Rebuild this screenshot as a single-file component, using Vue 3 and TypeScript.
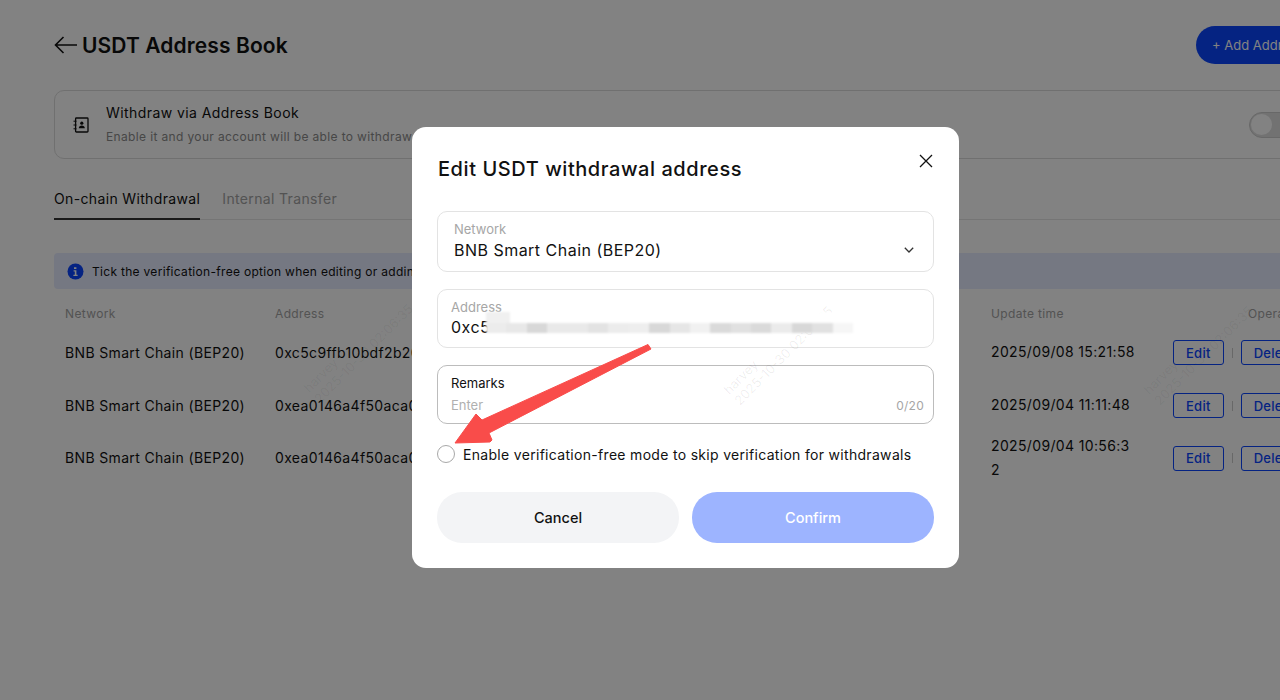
<script setup lang="ts">
interface Row {
  network: string
  address: string
  time: string
}

const rows: Row[] = [
  { network: 'BNB Smart Chain (BEP20)', address: '0xc5c9ffb10bdf2b20', time: '2025/09/08 15:21:58' },
  { network: 'BNB Smart Chain (BEP20)', address: '0xea0146a4f50aca0', time: '2025/09/04 11:11:48' },
  { network: 'BNB Smart Chain (BEP20)', address: '0xea0146a4f50aca0', time: '2025/09/04 10:56:32' },
]

// mosaic over the address, left to right
const mosaic = ['#ececec', '#e8e8e8', '#d8d8d8', '#e9e9e9', '#e9e9e9', '#e3e3e3', '#ececec', '#eeeeee', '#d8d8d8', '#e6e6e6', '#f1f1f1', '#dadada', '#e1e1e1', '#dadada', '#ebebeb', '#d8d8d8', '#e1e1e1', '#f6f6f6']

const marks = [
  { left: 322, top: 376, color: 'rgba(0, 0, 0, 0.05)' },
  { left: 742, top: 378, color: 'rgba(0, 0, 0, 0.07)' },
  { left: 1162, top: 378, color: 'rgba(0, 0, 0, 0.05)' },
]
</script>

<template>
  <div class="page">
    <div class="content">
      <header class="head">
        <svg class="back" width="24" height="18" viewBox="0 0 24 18" fill="none" stroke="#111" stroke-width="1.6">
          <path d="M23 9H1.5M9.5 1 1.5 9l8 8" />
        </svg>
        <h1>USDT Address Book</h1>
        <button class="add">+ Add Address</button>
      </header>

      <section class="card">
        <svg class="book" width="16" height="16" viewBox="0 0 16 16" fill="none" stroke="#111" stroke-width="1.3">
          <rect x="2.6" y="1" width="12.4" height="14" rx="0.8" />
          <path d="M0.5 4.2h3M0.5 8h3M0.5 11.8h3" stroke-width="1" />
          <circle cx="8.8" cy="6.2" r="1.6" fill="#111" stroke="none" />
          <path d="M5.8 11.2c0-2 1.4-2.8 3-2.8s3 .8 3 2.8z" fill="#111" stroke="none" />
        </svg>
        <div class="card-text">
          <div class="card-title">Withdraw via Address Book</div>
          <div class="card-sub">Enable it and your account will be able to withdraw to whitelisted addresses only</div>
        </div>
        <span class="toggle"><i></i></span>
      </section>

      <nav class="tabs">
        <span class="tab on">On-chain Withdrawal</span>
        <span class="tab">Internal Transfer</span>
      </nav>

      <div class="notice">
        <svg width="17" height="17" viewBox="0 0 17 17">
          <circle cx="8.5" cy="8.5" r="8" fill="#0a45ff" />
          <path d="M7 4.2h2.4v1.8H7zM6.6 7.3h2.8v4.4h1.2v1.2H6.4v-1.2h1.4V8.5H6.6z" fill="#fff" />
        </svg>
        <span>Tick the verification-free option when editing or adding an address to skip verification for withdrawals</span>
      </div>

      <div class="table">
        <div class="tr th">
          <span>Network</span>
          <span>Address</span>
          <span>Update time</span>
          <span class="op-head">Operation</span>
        </div>
        <div v-for="(row, i) in rows" :key="i" class="tr">
          <span>{{ row.network }}</span>
          <span>{{ row.address }}</span>
          <span class="time">{{ row.time }}</span>
          <span class="ops">
            <button class="link">Edit</button>
            <i class="sep"></i>
            <button class="link">Delete</button>
          </span>
        </div>
      </div>
    </div>

    <div class="overlay">
      <div class="modal">
        <div class="modal-head">
          <h2>Edit USDT withdrawal address</h2>
          <svg width="14" height="14" viewBox="0 0 14 14" fill="none" stroke="#111" stroke-width="1.3">
            <path d="M1 1l12 12M13 1 1 13" />
          </svg>
        </div>

        <div class="field select">
          <label>Network</label>
          <div class="value">BNB Smart Chain (BEP20)</div>
          <svg class="chev" width="10" height="6" viewBox="0 0 10 6" fill="none" stroke="#333" stroke-width="1.3">
            <path d="M.8.8 5 5 9.2.8" />
          </svg>
        </div>

        <div class="field addr">
          <label>Address</label>
          <div class="value">0xc5</div>
          <div class="mosaic">
            <span class="mosaic-top"></span>
            <span class="mosaic-strip">
              <i v-for="(c, i) in mosaic" :key="i" :style="{ background: c }"></i>
            </span>
          </div>
        </div>

        <div class="field remarks">
          <label>Remarks</label>
          <div class="enter">Enter</div>
          <span class="count">0/20</span>
        </div>

        <div class="check">
          <span class="radio"></span>
          <span>Enable verification-free mode to skip verification for withdrawals</span>
        </div>

        <div class="actions">
          <button class="cancel">Cancel</button>
          <button class="confirm">Confirm</button>
        </div>
      </div>
    </div>

    <div v-for="(m, i) in marks" :key="i" class="mark" :style="{ left: m.left + 'px', top: m.top + 'px', color: m.color }">
      harvey<br />2025-10-30 02:06:35
    </div>

    <svg class="arrow" width="1280" height="700" viewBox="0 0 1280 700">
      <path d="M648 344.5 651 349 489 433 492 440 490 442 455 443 476 414 482 420z" fill="#f94c4a" stroke="#f94c4a" stroke-width="1" stroke-linejoin="round" />
    </svg>
  </div>
</template>

<style>
body {
  overflow: hidden;
}
</style>

<style scoped>
.page {
  position: relative;
  width: 1280px;
  height: 700px;
  overflow: hidden;
  background: #fff;
  font-family: Inter, "Liberation Sans", sans-serif;
  color: #111;
}

button {
  font-family: inherit;
  border: 0;
  cursor: pointer;
}

.content {
  width: 1322px;
  padding: 26px 0 0 54px;
  box-sizing: border-box;
}

.head {
  display: flex;
  align-items: center;
  height: 38px;
}

.back {
  margin-right: 4px;
}

h1 {
  margin: 0;
  font-size: 21px;
  font-weight: 600;
  letter-spacing: 0.005em;
}

.add {
  margin-left: auto;
  height: 38px;
  width: 126px;
  flex-shrink: 0;
  border-radius: 19px 0 0 19px;
  background: #0a45ff;
  color: #fff;
  font-size: 13px;
  text-align: left;
  white-space: nowrap;
  padding: 0 0 0 16px;
}

.card {
  display: flex;
  align-items: center;
  margin-top: 26px;
  height: 69px;
  box-sizing: border-box;
  padding: 0 20px 0 18px;
  border: 1.5px solid #dcdcdc;
  border-radius: 10px;
}

.card-text {
  margin-left: 17px;
  white-space: nowrap;
}

.card-title {
  font-size: 14px;
  line-height: 20px;
  letter-spacing: 0.03em;
}

.card-sub {
  margin-top: 5px;
  font-size: 12px;
  line-height: 18px;
  letter-spacing: 0.03em;
  color: #8c8c8c;
}

.toggle {
  display: block;
  margin-left: auto;
  flex-shrink: 0;
  width: 52px;
  height: 26px;
  box-sizing: border-box;
  padding: 1px;
  border-radius: 13px;
  background: #e0e0e0;
  border: 1.5px solid #ccc;
}

.toggle i {
  display: block;
  width: 21px;
  height: 21px;
  border-radius: 50%;
  background: #fff;
}

.tabs {
  display: flex;
  gap: 22px;
  margin-top: 28px;
  height: 32px;
  border-bottom: 1px solid #e6e6e6;
}

.tab {
  height: 33px;
  line-height: 24px;
  box-sizing: border-box;
  font-size: 14px;
  letter-spacing: 0.025em;
  color: #a3a3a3;
}

.tab.on {
  color: #111;
  border-bottom: 2px solid #333;
}

.notice {
  display: flex;
  align-items: center;
  gap: 8px;
  margin-top: 33px;
  height: 36px;
  padding-left: 13px;
  background: #e6ebff;
  border-radius: 4px;
  font-size: 12px;
  letter-spacing: 0.025em;
  color: #111;
  white-space: nowrap;
}

.table {
  margin-top: 11px;
  font-size: 14px;
  letter-spacing: 0.025em;
}

.tr {
  display: grid;
  grid-template-columns: 210px 716px 182px 1fr;
  align-items: center;
  height: 52.7px;
  padding-left: 11px;
}

.th {
  height: 26px;
  font-size: 12px;
  letter-spacing: 0.03em;
  color: #a3a3a3;
}

.op-head {
  padding-left: 75px;
}

.time {
  width: 147px;
  line-height: 24px;
  word-break: break-all;
}

.ops {
  display: flex;
  align-items: center;
  padding-top: 1px;
}

.link {
  height: 25px;
  padding: 0 12px;
  background: transparent;
  border: 1px solid #0a45ff;
  border-radius: 3px;
  color: #0a45ff;
  font-size: 13px;
  font-weight: 500;
  letter-spacing: 0.02em;
}

.sep {
  display: block;
  width: 1px;
  height: 10px;
  margin: 0 8px;
  background: #ccc;
}

.overlay {
  position: absolute;
  inset: 0;
  background: rgba(0, 0, 0, 0.49);
}

.modal {
  position: absolute;
  left: 412px;
  top: 127px;
  width: 547px;
  height: 441px;
  box-sizing: border-box;
  padding: 25px;
  background: #fff;
  border-radius: 14px;
}

.modal-head {
  display: flex;
  justify-content: space-between;
  align-items: flex-start;
  height: 59px;
}

.modal-head svg {
  margin-top: 2px;
  margin-right: 1px;
}

h2 {
  margin: 5px 0 0 1px;
  font-size: 20px;
  line-height: 24px;
  font-weight: 500;
  letter-spacing: 0.028em;
}

.field {
  position: relative;
  box-sizing: border-box;
  border: 1.5px solid #e3e3e3;
  border-radius: 10px;
  margin-bottom: 17px;
}

.field label {
  display: block;
  font-size: 13px;
  line-height: 16px;
  color: #a6a6a6;
}

.value {
  font-size: 16px;
  line-height: 22px;
  letter-spacing: 0.03em;
}

.select {
  height: 61px;
  padding: 9px 16px;
}

.select .value {
  margin-top: 2px;
}

.chev {
  position: absolute;
  right: 19px;
  top: 35px;
}

.addr {
  height: 59px;
  padding: 9px 13px;
}

.addr .value {
  margin-top: 1px;
}

.mosaic {
  position: absolute;
  left: 48px;
  top: 22px;
  z-index: 1;
  background: #fff;
  filter: blur(1.2px);
}

.mosaic-top {
  display: block;
  width: 24px;
  height: 11px;
  background: #f0f0f0;
}

.mosaic-strip {
  display: flex;
}

.mosaic-strip i {
  display: block;
  width: 20.4px;
  height: 10px;
}

.remarks {
  height: 59px;
  padding: 9px 13px;
  border-color: #bcbcbc;
  margin-bottom: 0;
}

.remarks label {
  color: #111;
}

.enter {
  margin-top: 5px;
  font-size: 13px;
  line-height: 18px;
  color: #b0b0b0;
}

.count {
  position: absolute;
  right: 9px;
  bottom: 10px;
  font-size: 12px;
  letter-spacing: 0.02em;
  color: #a6a6a6;
}

.check {
  display: flex;
  align-items: center;
  gap: 8px;
  margin-top: 20px;
  height: 20px;
  font-size: 14px;
  letter-spacing: 0.022em;
}

.radio {
  display: block;
  width: 18px;
  height: 18px;
  box-sizing: border-box;
  border: 1.5px solid #a8a8a8;
  border-radius: 50%;
}

.actions {
  display: flex;
  gap: 13px;
  margin-top: 28px;
}

.actions button {
  flex: 1;
  height: 51px;
  border-radius: 25px;
  font-size: 14.5px;
  font-weight: 500;
}

.cancel {
  background: #f3f4f6;
  color: #111;
}

.confirm {
  background: #9db4ff;
  color: #fff;
}

.mark {
  position: absolute;
  height: 30px;
  font-size: 13px;
  line-height: 15px;
  transform: rotate(-45deg);
  transform-origin: 0 100%;
  white-space: nowrap;
  pointer-events: none;
}

.arrow {
  position: absolute;
  left: 0;
  top: 0;
  pointer-events: none;
}
</style>
